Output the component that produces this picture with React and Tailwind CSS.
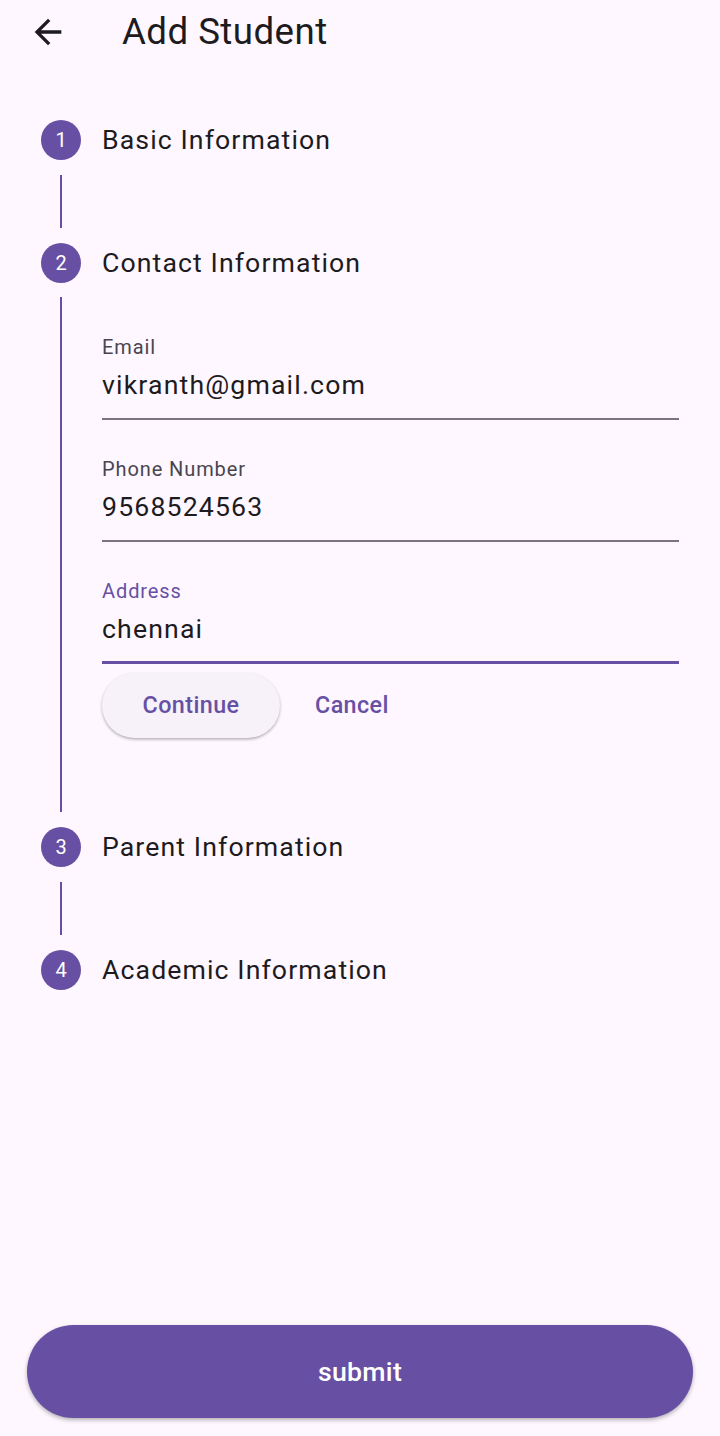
import React from "react";

function StepHeader({ n, title }) {
  return (
    <div className="flex h-[40px] items-center">
      <div className="ml-[41px] flex h-[40px] w-[40px] items-center justify-center rounded-full bg-[#6750A4] text-[20px] text-white">
        {n}
      </div>
      <div className="ml-[21px] text-[26.67px] leading-[30px] tracking-[1.1px] text-[#1D1B20]">
        {title}
      </div>
    </div>
  );
}

function Connector() {
  return (
    <div className="h-[83px] py-[15px]">
      <div className="ml-[60px] h-full w-[2px] bg-[#6750A4]" />
    </div>
  );
}

function Field({ label, value }) {
  return (
    <div className="h-[122px]">
      <div className="h-[24px] text-[20px] leading-[24px] tracking-[0.9px] text-[#49454F]">
        {label}
      </div>
      <div className="mt-[10px] h-[32px] text-[26.67px] leading-[32px] tracking-[1.15px] text-[#1D1B20]">
        {value}
      </div>
      <div className="mt-[17px] h-[2px] bg-[#79747E]" />
    </div>
  );
}

export default function App() {
  return (
    <div
      className="flex h-[1436px] w-[720px] flex-col bg-[#FEF7FF]"
      style={{ fontFamily: "Roboto, 'Noto Sans', sans-serif" }}
    >
      <div className="flex h-[64px] items-center">
        <div className="ml-[28px] flex h-[40px] w-[40px] items-center justify-center">
          <svg width="40" height="40" viewBox="0 0 24 24" fill="#1D1B20">
            <path d="M20 11H7.83l5.59-5.59L12 4l-8 8 8 8 1.41-1.41L7.83 13H20v-2z" />
          </svg>
        </div>
        <div className="ml-[54px] text-[36.67px] leading-[44px] tracking-[0.45px] text-[#1D1B20]">
          Add Student
        </div>
      </div>

      <div className="mt-[56px]">
        <StepHeader n="1" title="Basic Information" />
        <Connector />
        <StepHeader n="2" title="Contact Information" />
        <div className="relative h-[544px]">
          <div className="absolute left-[60px] top-[14px] h-[515px] w-[2px] bg-[#6750A4]" />
          <div className="ml-[102px] mr-[41px] pt-[52px]">
            <Field label="Email" value="vikranth@gmail.com" />
            <Field label="Phone Number" value="9568524563" />
            <div>
              <div className="h-[24px] text-[20px] leading-[24px] tracking-[0.9px] text-[#6750A4]">
                Address
              </div>
              <div className="mt-[10px] h-[32px] text-[26.67px] leading-[32px] tracking-[1.15px] text-[#1D1B20]">
                chennai
              </div>
              <div className="mt-[16px] h-[3px] bg-[#6750A4]" />
            </div>
            <div className="mt-[9px] flex items-center">
              <button className="flex h-[65px] w-[178px] items-center justify-center rounded-full bg-[#F7F2FA] text-[23.33px] font-medium tracking-[0.4px] text-[#6750A4] shadow-[0_1.5px_3px_rgba(0,0,0,0.3)]">
                Continue
              </button>
              <button className="ml-[14px] flex h-[65px] items-center px-[21px] text-[23.33px] font-medium tracking-[0.4px] text-[#6750A4]">
                Cancel
              </button>
            </div>
          </div>
        </div>
        <StepHeader n="3" title="Parent Information" />
        <Connector />
        <StepHeader n="4" title="Academic Information" />
      </div>

      <div className="mt-auto mb-[18px] px-[27px]">
        <button className="flex h-[93px] w-full items-center justify-center rounded-full bg-[#6750A4] text-[26.67px] font-medium tracking-[0.3px] text-white shadow-[0_2px_4px_rgba(0,0,0,0.3)]">
          submit
        </button>
      </div>
    </div>
  );
}
